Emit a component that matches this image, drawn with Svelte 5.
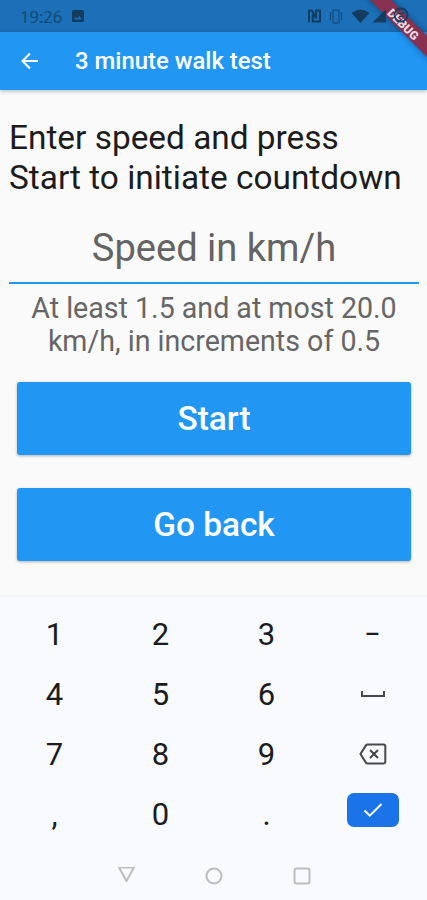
<script lang="ts">
  const keys = ['1', '2', '3', '−', '4', '5', '6', 'space', '7', '8', '9', 'delete', ',', '0', '.', 'done'];
</script>

<div class="screen">
  <div class="status-bar">
    <span class="clock">19:26</span>
    <svg class="photo" width="12" height="12" viewBox="0 0 12 12">
      <path fill-rule="evenodd" d="M1.5 0h9Q12 0 12 1.5v9q0 1.5-1.5 1.5h-9Q0 12 0 10.5v-9Q0 0 1.5 0ZM2 9.500h8L7.400 6 5.300 8.400 3.900 7Z" />
    </svg>
    <svg class="system" width="102" height="20" viewBox="0 0 102 20">
      <g fill="none" stroke="currentColor">
        <path stroke-width="2" d="M2 16.500V4.500H4.800L9.500 12.500M5.800 8.500V15.500H13V4.500H9V12" />
        <g stroke-width="1.300" opacity=".6">
          <rect x="26" y="4" width="6" height="13" rx="1" />
          <path d="M23.500 6.500v8M34.500 6.500v8" />
        </g>
        <circle cx="94" cy="9" r="6.500" stroke-width="1.800" />
        <path stroke-width="1.500" d="M91 7.500h6M92 10.500h5" />
      </g>
      <path d="M44.500 7Q53.500-.2 62.500 7L53.500 17ZM65.500 16.500 79 3V16.500Z" />
    </svg>
  </div>

  <header class="app-bar">
    <svg width="18" height="18" viewBox="0 0 18 18">
      <path d="M17 9H2M9 1.500 1.500 9 9 16.500" />
    </svg>
    <h1>3 minute walk test</h1>
  </header>

  <main>
    <p class="prompt">Enter speed and press<br />Start to initiate countdown</p>
    <div class="field">Speed in km/h</div>
    <p class="helper">At least 1.5 and at most 20.0<br />km/h, in increments of 0.5</p>
    <div class="actions">
      <button>Start</button>
      <button>Go back</button>
    </div>
  </main>

  <div class="keyboard">
    <div class="keys">
      {#each keys as key}
        <div class="key">
          {#if key === 'space'}
            <svg width="24" height="8" viewBox="0 0 24 8">
              <path d="M1 1v5h22V1" />
            </svg>
          {:else if key === 'delete'}
            <svg width="28" height="22" viewBox="0 0 28 22">
              <path d="M8.500 1.500h16q1.800 0 1.800 1.800v15.400q0 1.800-1.800 1.800h-16q-1 0-1.600-.9L1.500 11l5.400-8.600q.6-.9 1.600-.9ZM11 7l8 8M19 7l-8 8" />
            </svg>
          {:else if key === 'done'}
            <span class="done">
              <svg width="20" height="16" viewBox="0 0 20 16">
                <path d="M1.500 8.500 6.800 13.700 18.500 2" />
              </svg>
            </span>
          {:else}
            <span class:minus={key === '−'}>{key}</span>
          {/if}
        </div>
      {/each}
    </div>
    <nav>
      <svg width="18" height="18" viewBox="0 0 18 18"><path d="M2 .5h15L9.500 14Z" /></svg>
      <svg width="18" height="18" viewBox="0 0 18 18"><circle cx="9" cy="9" r="7.500" /></svg>
      <svg width="18" height="18" viewBox="0 0 18 18"><rect x="1.500" y="1.500" width="15" height="15" rx="2" /></svg>
    </nav>
  </div>

  <div class="debug">DEBUG</div>
</div>

<style>
  :global(body) {
    margin: 0;
  }

  .screen {
    position: relative;
    display: flex;
    flex-direction: column;
    width: 427px;
    height: 900px;
    overflow: hidden;
    background: #fafafa;
    font-family: Roboto, sans-serif;
  }

  .status-bar {
    display: flex;
    align-items: center;
    box-sizing: border-box;
    height: 32px;
    padding: 0 18px 0 20px;
    background: #1b70b8;
    color: #123c60;
  }

  .status-bar svg {
    fill: currentColor;
  }

  .clock {
    width: 52px;
    font-family: "Noto Sans", sans-serif;
    font-size: 16.5px;
    color: #154a78;
  }

  /* system icons are painted over the debug ribbon */
  .system {
    position: relative;
    z-index: 2;
    margin-left: auto;
  }

  .app-bar {
    display: flex;
    align-items: center;
    height: 58px;
    padding-left: 21px;
    background: #2196f3;
    box-shadow: 0 1px 4px rgba(0, 0, 0, 0.3);
    color: #fff;
  }

  .app-bar svg {
    fill: none;
    stroke: #fff;
    stroke-width: 2;
  }

  h1 {
    margin: 0 0 0 36px;
    font-size: 23.9px;
    font-weight: 500;
  }

  main {
    flex: 1;
    padding: 28px 8px 0 9px;
  }

  p {
    margin: 0;
    white-space: nowrap;
  }

  .prompt {
    font-size: 33.4px;
    line-height: 39.5px;
    color: #1c1c1c;
  }

  .field {
    box-sizing: border-box;
    height: 87px;
    padding-top: 29px;
    border-bottom: 2px solid #2196f3;
    font-size: 38.1px;
    line-height: 45px;
    text-align: center;
    color: #646464;
  }

  .helper {
    padding-top: 8px;
    font-size: 28.6px;
    line-height: 33.4px;
    text-align: center;
    color: #666;
  }

  .actions {
    display: flex;
    flex-direction: column;
    gap: 33px;
    padding: 23px 8px 0;
  }

  button {
    height: 73px;
    padding: 0;
    border: 0;
    border-radius: 3px;
    background: #2196f3;
    box-shadow: 0 1px 3px rgba(0, 0, 0, 0.3);
    font: 500 33.4px Roboto, sans-serif;
    color: #fff;
  }

  .keyboard {
    height: 305px;
    box-sizing: border-box;
    border-top: 2px solid #f2f4f5;
    background: #f8fafd;
  }

  .keys {
    display: grid;
    grid-template-columns: repeat(4, 106px);
    grid-auto-rows: 60px;
    padding: 7px 2px 0 1.5px;
  }

  .key {
    display: flex;
    align-items: center;
    justify-content: center;
    font-size: 31px;
    color: #1b1c1e;
  }

  .key svg {
    fill: none;
    stroke: #46484a;
    stroke-width: 2;
  }

  .minus {
    font-size: 29px;
  }

  .done {
    display: flex;
    align-items: center;
    justify-content: center;
    width: 52px;
    height: 34px;
    margin-bottom: 8px;
    border-radius: 7px;
    background: #1a73e8;
  }

  .key .done svg {
    stroke: #fff;
  }

  nav {
    display: flex;
    justify-content: center;
    gap: 70px;
    padding-top: 23px;
  }

  nav svg {
    fill: none;
    stroke: #bcbec0;
    stroke-width: 2;
    stroke-linejoin: round;
  }

  .debug {
    position: absolute;
    z-index: 1;
    top: 16px;
    right: -47px;
    width: 140px;
    height: 15px;
    transform: rotate(45deg);
    background: #87304f;
    box-shadow: 0 0 6px rgba(0, 0, 0, 0.4);
    font-size: 12px;
    font-weight: 900;
    line-height: 18px;
    text-align: center;
    color: #e8dce4;
  }
</style>
